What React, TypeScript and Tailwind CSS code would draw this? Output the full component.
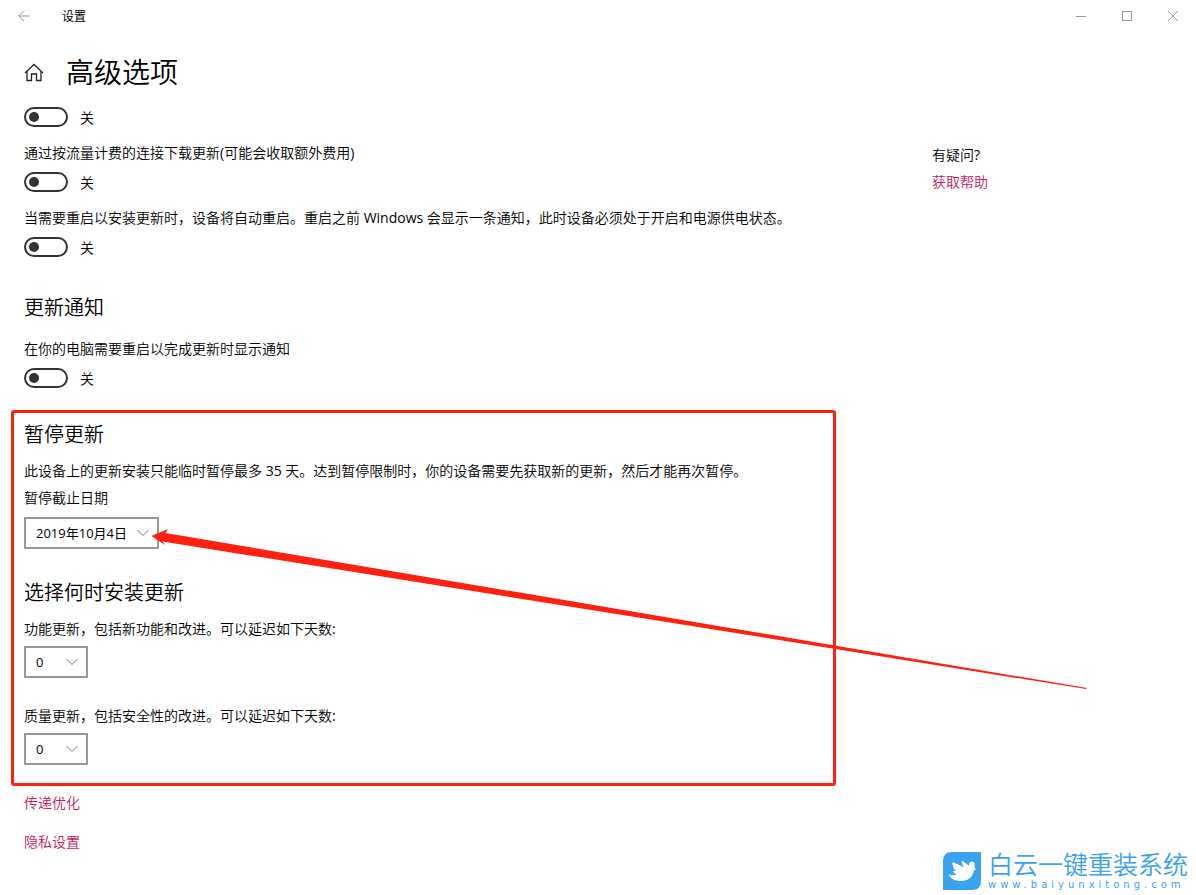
import React from "react";

const sans = "font-['Open_Sans','Noto_Sans_CJK_SC',sans-serif]";

function Toggle({ label }: { label: string }) {
  return (
    <label className="flex h-5 items-center gap-3">
      <input
        type="checkbox"
        role="switch"
        aria-label={label}
        className="flex h-5 w-11 appearance-none items-center rounded-full border-2 border-[#333] bg-white px-[3px] before:size-[10px] before:rounded-full before:bg-[#333] checked:justify-end"
      />
      <span className="pt-0.5 leading-5">关</span>
    </label>
  );
}

// Latin text sits one weight above the Chinese around it
function Latin({ children }: { children: React.ReactNode }) {
  return <span className="font-normal">{children}</span>;
}

type DropdownProps = {
  id: string;
  options: string[];
  className: string;
};

function Dropdown({ id, options, className }: DropdownProps) {
  return (
    <div className={`relative ${className}`}>
      <select
        id={id}
        className="block h-8 w-full appearance-none border-2 border-[#999] bg-white pl-[10px] text-[13px] font-normal text-black"
      >
        {options.map((option) => (
          <option key={option}>{option}</option>
        ))}
      </select>
      <svg
        viewBox="0 0 12 8"
        className="pointer-events-none absolute right-[10px] top-3 h-2 w-3"
        fill="none"
        stroke="#777"
      >
        <path d="M0.5 1 L6 6.5 L11.5 1" />
      </svg>
    </div>
  );
}

function SectionTitle({ children }: { children: React.ReactNode }) {
  return <h2 className="text-xl leading-7 font-[350]">{children}</h2>;
}

function TitleBar() {
  return (
    <header className="flex h-8 items-center justify-between pl-[18px]">
      <div className="flex items-center gap-8">
        <button aria-label="返回">
          <svg viewBox="0 0 12 12" className="size-3" fill="none" stroke="#999">
            <path d="M12 6 H0.7 M6 0.7 L0.7 6 L6 11.3" />
          </svg>
        </button>
        <span className="pt-0.5 text-xs font-normal">设置</span>
      </div>
      <div className="flex">
        <button aria-label="最小化" className="flex h-8 w-[46px] items-center justify-center">
          <svg viewBox="0 0 10 10" className="size-[10px]" stroke="#999">
            <path d="M0 5.5 H10" />
          </svg>
        </button>
        <button aria-label="最大化" className="flex h-8 w-[46px] items-center justify-center">
          <svg viewBox="0 0 10 10" className="size-[10px]" fill="none" stroke="#999">
            <rect x="0.5" y="0.5" width="9" height="9" />
          </svg>
        </button>
        <button aria-label="关闭" className="flex h-8 w-[46px] items-center justify-center">
          <svg viewBox="0 0 10 10" className="size-[10px]" stroke="#999">
            <path d="M0 0 L10 10 M10 0 L0 10" />
          </svg>
        </button>
      </div>
    </header>
  );
}

function Arrow() {
  return (
    <svg
      viewBox="0 0 940 164"
      className="pointer-events-none absolute left-[127px] top-[10px] h-[164px] w-[940px] max-w-none"
      fill="#ff2010"
    >
      <path d="M0.5 9 L17 2 L14.5 6 L936 161 L935 162 L11.5 14.5 L14 18 Z" />
    </svg>
  );
}

function Watermark() {
  return (
    <footer className="flex justify-end gap-[7px] pr-2 text-[#3ba2f0]">
      <svg viewBox="0 0 38 38" className="size-[38px]">
        <path d="M9 0 H38 V29 Q38 38 29 38 H0 V9 Q0 0 9 0 Z" fill="#3ba2f0" />
        <path
          d="M9.500 10 C13 11.500 17 13 20.500 15.500 C19.800 13 19 10.500 18.300 8.500 C21.500 10.200 24 12 25.800 13.800 C26 11 27.300 9.500 29 9.500 C30.600 9.500 31.500 10.500 31.600 12.300 C31.700 14 31.500 15.500 33 18.500 C32.200 18 31.400 17.900 30.800 18.200 C30 25 25 29 18 29 C13 29 8.500 27.500 5.500 22.500 C8 23.300 11 23.500 14 22.800 C12 22 10.500 20.500 9.800 19 C10.800 19.200 11.800 19.100 12.500 18.800 C10.500 16.500 9.200 13.500 9.500 10 Z"
          fill="#fff"
        />
      </svg>
      <div>
        <div className="font-['Liberation_Sans','Noto_Sans_CJK_SC',sans-serif] text-[25px] leading-[26px] font-[350]">
          白云一键重装系统
        </div>
        <div className="pt-px font-['DejaVu_Sans',sans-serif] text-[10px] leading-3 font-normal tracking-[4px]">
          www.baiyunxitong.com
        </div>
      </div>
    </footer>
  );
}

export default function App() {
  return (
    <div className={`${sans} overflow-x-hidden bg-white text-sm leading-5 font-[350] text-black`} lang="zh-CN">
      <TitleBar />

      <div className="flex items-center gap-[22px] pl-6 pt-5">
        <a href="#home" aria-label="主页">
          <svg viewBox="0 0 20 20" className="size-5" fill="none" stroke="#222" strokeWidth="1.3">
            <path d="M1 11 L10 2.500 L19 11" />
            <path d="M3 9.500 V18.500 H7.500 V12 H12.500 V18.500 H17 V9.500" />
          </svg>
        </a>
        <h1 className="text-[28px] leading-10 font-[350]">高级选项</h1>
      </div>

      <div className="flex gap-24 pl-[11px] pt-[15px]">
        <main className="flex-1">
          <div className="flex flex-col gap-4 pl-[13px]">
            <Toggle label="更新选项" />
            <div className="flex flex-col gap-[9px]">
              <p>
                通过按流量计费的连接下载更新<Latin>(</Latin>可能会收取额外费用<Latin>)</Latin>
              </p>
              <Toggle label="通过按流量计费的连接下载更新" />
            </div>
            <div className="flex flex-col gap-[9px]">
              <p>
                当需要重启以安装更新时，设备将自动重启。重启之前 <Latin>Windows</Latin>{" "}
                会显示一条通知，此时设备必须处于开启和电源供电状态。
              </p>
              <Toggle label="自动重启设备" />
            </div>
          </div>

          <section className="mt-[37px] pl-[13px]">
            <SectionTitle>更新通知</SectionTitle>
            <div className="mt-[17px] flex flex-col gap-[9px]">
              <p>在你的电脑需要重启以完成更新时显示通知</p>
              <Toggle label="在你的电脑需要重启以完成更新时显示通知" />
            </div>
          </section>

          <div className="mt-[22px] rounded-[3px] border-[3px] border-[#ff2010] px-[10px] pb-[18px] pt-2">
            <section>
              <SectionTitle>暂停更新</SectionTitle>
              <p className="mt-3">
                此设备上的更新安装只能临时暂停最多 <Latin>35</Latin>{" "}
                天。达到暂停限制时，你的设备需要先获取新的更新，然后才能再次暂停。
              </p>
              <label htmlFor="pause-until" className="mt-[7px] block">
                暂停截止日期
              </label>
              <div className="relative mt-[9px]">
                <Dropdown id="pause-until" options={["2019年10月4日"]} className="w-[135px]" />
                <Arrow />
              </div>
            </section>

            <section className="mt-[30px]">
              <SectionTitle>选择何时安装更新</SectionTitle>
              <label htmlFor="feature-days" className="mt-3 block">
                功能更新，包括新功能和改进。可以延迟如下天数<Latin>:</Latin>
              </label>
              <Dropdown id="feature-days" options={["0"]} className="mt-[7px] w-16" />
              <label htmlFor="quality-days" className="mt-7 block">
                质量更新，包括安全性的改进。可以延迟如下天数<Latin>:</Latin>
              </label>
              <Dropdown id="quality-days" options={["0"]} className="mt-[7px] w-16" />
            </section>
          </div>

          <nav className="mt-[7px] flex flex-col items-start gap-[19px] pl-[13px] text-[#c9175a]">
            <a href="#delivery">传递优化</a>
            <a href="#privacy">隐私设置</a>
          </nav>
        </main>

        <aside className="w-[264px] pt-[38px]">
          <p>
            有疑问<Latin>?</Latin>
          </p>
          <a href="#help" className="mt-[7px] block text-[#c9175a]">
            获取帮助
          </a>
        </aside>
      </div>

      <Watermark />
    </div>
  );
}
